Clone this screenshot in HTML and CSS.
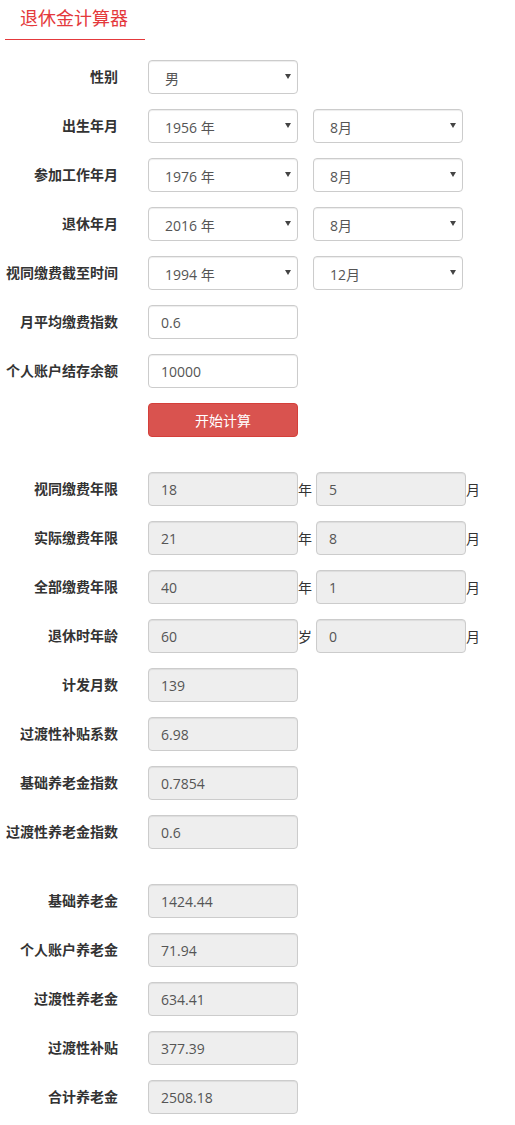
FILE: index.html
```html
<!DOCTYPE html>
<html lang="zh-CN">
<head>
    <meta charset="UTF-8">
    <meta name="viewport" content="width=device-width, initial-scale=1.0">
    <title>退休金计算器</title>
    <link rel="stylesheet" href="styles.css">
</head>
<body>
    <header class="title-bar">
        <h1>退休金计算器</h1>
    </header>
    <div class="calc">
        <div class="form-group">
            <label>性别</label>
            <div class="select-wrap">
                <select><option>男</option><option>女</option></select>
            </div>
        </div>
        <div class="form-group">
            <label>出生年月</label>
            <div class="select-wrap"><select><option>1956 年</option></select></div>
            <div class="select-wrap"><select><option>8月</option></select></div>
        </div>
        <div class="form-group">
            <label>参加工作年月</label>
            <div class="select-wrap"><select><option>1976 年</option></select></div>
            <div class="select-wrap"><select><option>8月</option></select></div>
        </div>
        <div class="form-group">
            <label>退休年月</label>
            <div class="select-wrap"><select><option>2016 年</option></select></div>
            <div class="select-wrap"><select><option>8月</option></select></div>
        </div>
        <div class="form-group">
            <label>视同缴费截至时间</label>
            <div class="select-wrap"><select><option>1994 年</option></select></div>
            <div class="select-wrap"><select><option>12月</option></select></div>
        </div>
        <div class="form-group">
            <label>月平均缴费指数</label>
            <input class="form-control" type="text" value="0.6">
        </div>
        <div class="form-group">
            <label>个人账户结存余额</label>
            <input class="form-control" type="text" value="10000">
        </div>
        <div class="form-group">
            <label></label>
            <button class="btn-calc">开始计算</button>
        </div>

        <div class="section">
            <div class="form-group">
                <label>视同缴费年限</label>
                <input class="form-control" type="text" value="18" readonly>
                <span class="unit">年</span>
                <input class="form-control" type="text" value="5" readonly>
                <span class="unit">月</span>
            </div>
            <div class="form-group">
                <label>实际缴费年限</label>
                <input class="form-control" type="text" value="21" readonly>
                <span class="unit">年</span>
                <input class="form-control" type="text" value="8" readonly>
                <span class="unit">月</span>
            </div>
            <div class="form-group">
                <label>全部缴费年限</label>
                <input class="form-control" type="text" value="40" readonly>
                <span class="unit">年</span>
                <input class="form-control" type="text" value="1" readonly>
                <span class="unit">月</span>
            </div>
            <div class="form-group">
                <label>退休时年龄</label>
                <input class="form-control" type="text" value="60" readonly>
                <span class="unit">岁</span>
                <input class="form-control" type="text" value="0" readonly>
                <span class="unit">月</span>
            </div>
            <div class="form-group">
                <label>计发月数</label>
                <input class="form-control" type="text" value="139" readonly>
            </div>
            <div class="form-group">
                <label>过渡性补贴系数</label>
                <input class="form-control" type="text" value="6.98" readonly>
            </div>
            <div class="form-group">
                <label>基础养老金指数</label>
                <input class="form-control" type="text" value="0.7854" readonly>
            </div>
            <div class="form-group">
                <label>过渡性养老金指数</label>
                <input class="form-control" type="text" value="0.6" readonly>
            </div>
        </div>

        <div class="section">
            <div class="form-group">
                <label>基础养老金</label>
                <input class="form-control" type="text" value="1424.44" readonly>
            </div>
            <div class="form-group">
                <label>个人账户养老金</label>
                <input class="form-control" type="text" value="71.94" readonly>
            </div>
            <div class="form-group">
                <label>过渡性养老金</label>
                <input class="form-control" type="text" value="634.41" readonly>
            </div>
            <div class="form-group">
                <label>过渡性补贴</label>
                <input class="form-control" type="text" value="377.39" readonly>
            </div>
            <div class="form-group">
                <label>合计养老金</label>
                <input class="form-control" type="text" value="2508.18" readonly>
            </div>
        </div>
    </div>
</body>
</html>
```

FILE: styles.css
```css
body {
    font-family: 'Open Sans', 'Noto Sans CJK SC', sans-serif;
    font-size: 14px;
    color: #333;
    background-color: #fff;
    margin: 0;
    padding: 0;
}
.title-bar {
    width: 140px;
    margin: 0 0 0 5px;
    padding: 7px 0 10px;
    border-bottom: 1px solid #e4393c;
    box-sizing: border-box;
    height: 40px;
}
.title-bar h1 {
    margin: 0;
    padding-left: 15px;
    font-size: 18px;
    line-height: 22px;
    font-weight: 400;
    color: #e4393c;
}
.calc {
    padding-top: 20px;
}
.section {
    padding-top: 20px;
}
.form-group {
    display: flex;
    align-items: center;
    height: 34px;
    margin-bottom: 15px;
}
.form-group label {
    width: 118px;
    margin-right: 30px;
    text-align: right;
    font-weight: 700;
    line-height: 34px;
    white-space: nowrap;
    flex-shrink: 0;
}
.select-wrap {
    position: relative;
    width: 150px;
    margin-right: 15px;
}
.select-wrap::after {
    content: '';
    position: absolute;
    right: 7px;
    top: 14px;
    border-left: 3px solid transparent;
    border-right: 3px solid transparent;
    border-top: 5px solid #444;
    pointer-events: none;
}
.select-wrap select {
    -webkit-appearance: none;
    appearance: none;
    width: 150px;
    height: 34px;
    padding: 3px 20px 0 16px;
    border: 1px solid #ccc;
    border-radius: 4px;
    background-color: #fff;
    font-family: inherit;
    font-size: 14px;
    color: #555;
    box-shadow: inset 0 1px 1px rgba(0, 0, 0, 0.075);
}
.form-control {
    width: 150px;
    height: 34px;
    padding: 0 12px;
    border: 1px solid #ccc;
    border-radius: 4px;
    background-color: #fff;
    box-sizing: border-box;
    font-family: inherit;
    font-size: 14px;
    color: #555;
    box-shadow: inset 0 1px 1px rgba(0, 0, 0, 0.075);
    flex-shrink: 0;
}
.form-control[readonly] {
    background-color: #eee;
}
.unit {
    width: 18px;
    flex-shrink: 0;
    line-height: 34px;
    padding-top: 2px;
}
.btn-calc {
    width: 150px;
    height: 34px;
    border: 1px solid #d43f3a;
    border-radius: 4px;
    background-color: #d9534f;
    color: #fff;
    font-family: inherit;
    font-size: 14px;
    cursor: pointer;
}
.btn-calc:hover {
    background-color: #c9302c;
}
```
